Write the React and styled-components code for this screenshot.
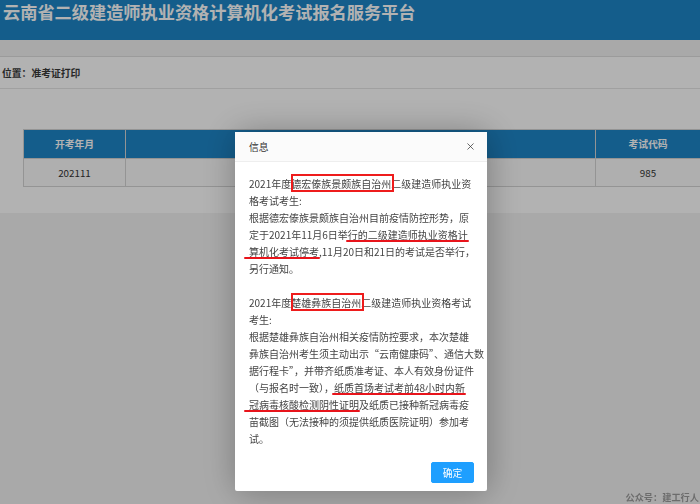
import React from 'react';
import styled, { createGlobalStyle } from 'styled-components';
import { X } from 'lucide-react';

const GlobalStyle = createGlobalStyle`
  html, body {
    margin: 0;
    padding: 0;
    height: 100%;
    overflow: hidden;
  }
  body {
    font-family: "Noto Sans CJK SC", "Noto Sans", sans-serif;
    color: #333;
  }
  #root {
    height: 100%;
  }
`;

const Page = styled.div`
  height: 100%;
  display: flex;
  flex-direction: column;
  background: #fff;
`;

const Header = styled.header`
  height: 40px;
  background: #1e86c8;
  padding: 0 0 0 3px;
  box-sizing: border-box;
`;

const SiteTitle = styled.h1`
  margin: 0;
  font-size: 17.2px;
  line-height: 23px;
  font-weight: 700;
  color: #fff;
`;

const NavBar = styled.nav`
  height: 16px;
  background: #f2f2f2;
  border-bottom: 1px solid #dedede;
`;

const Breadcrumb = styled.div`
  height: 31px;
  display: flex;
  align-items: center;
  padding-left: 2px;
  font-size: 9.8px;
  font-weight: 700;
  color: #3a3a3a;
  border-bottom: 1px solid #e6e6e6;
`;

const Content = styled.section`
  padding: 40px 0 26px 23px;
  background: #fff;
`;

const Table = styled.table`
  width: 678px;
  border-collapse: collapse;
  table-layout: fixed;
  font-size: 9.8px;
`;

const HeadCell = styled.th`
  height: 28px;
  padding: 0;
  background: #1e86c8;
  color: #fff;
  font-weight: 700;
  text-align: center;
  border: 1px solid #d4d4d4;
  width: ${p => p.$width || 'auto'};
`;

const Cell = styled.td`
  height: 27px;
  padding: 0;
  text-align: center;
  background: #fbfbfb;
  color: #333;
  border: 1px solid #d4d4d4;
`;

const Lower = styled.div`
  flex: 1;
  background: #f3f3f3;
`;

const Shade = styled.div`
  position: fixed;
  inset: 0;
  background: rgba(0, 0, 0, 0.3);
`;

const Dialog = styled.div`
  position: fixed;
  left: 235px;
  top: 132px;
  width: 252px;
  background: #fff;
  border-radius: 2px;
  box-shadow: 1px 1px 35px rgba(0, 0, 0, 0.3);
`;

const DialogTitle = styled.div`
  height: 29px;
  display: flex;
  align-items: center;
  justify-content: space-between;
  padding: 0 10px 0 14px;
  background: #fbfbfb;
  border-bottom: 1px solid #eee;
  font-size: 9.8px;
  color: #333;
`;

const CloseButton = styled.button`
  display: flex;
  align-items: center;
  justify-content: center;
  width: 14px;
  height: 14px;
  padding: 0;
  border: 0;
  background: none;
  color: #333;
  cursor: pointer;
`;

const DialogBody = styled.div`
  padding: 13px 14px 14px;
  font-size: 10px;
  line-height: 17px;
  color: #444;
`;

const Line = styled.div`
  white-space: nowrap;
  min-height: 17px;
`;

const Boxed = styled.span`
  position: relative;

  &::before {
    content: '';
    position: absolute;
    top: -2px;
    bottom: -1px;
    left: 0;
    right: -3px;
    border: 2px solid #ee1c1c;
  }
`;

const Marked = styled.span`
  position: relative;

  &::after {
    content: '';
    position: absolute;
    left: ${p => (p.$overhang ? '-5px' : '-2px')};
    right: -1px;
    bottom: 0;
    height: 2px;
    border-radius: 1px;
    background: #e8141b;
  }
`;

const ButtonRow = styled.div`
  display: flex;
  justify-content: flex-end;
  padding: 1px 13px 8px;
`;

const OkButton = styled.button`
  width: 43px;
  height: 21px;
  padding: 0;
  border: 1px solid #1e9fff;
  border-radius: 2px;
  background: #1e9fff;
  color: #fff;
  font-family: inherit;
  font-size: 9.8px;
  cursor: pointer;
`;

const Watermark = styled.div`
  position: fixed;
  right: 1px;
  bottom: 0;
  font-size: 9.2px;
  line-height: 13px;
  font-weight: 700;
  color: #6c6c6c;
`;

export default function App() {
  return (
    <>
      <GlobalStyle />
      <Page>
        <Header>
          <SiteTitle>云南省二级建造师执业资格计算机化考试报名服务平台</SiteTitle>
        </Header>
        <NavBar />
        <Breadcrumb>位置：准考证打印</Breadcrumb>
        <Content>
          <Table>
            <thead>
              <tr>
                <HeadCell $width="101px">开考年月</HeadCell>
                <HeadCell>考试名称</HeadCell>
                <HeadCell $width="104px">考试代码</HeadCell>
              </tr>
            </thead>
            <tbody>
              <tr>
                <Cell>202111</Cell>
                <Cell>二级建造师执业资格考试</Cell>
                <Cell>985</Cell>
              </tr>
            </tbody>
          </Table>
        </Content>
        <Lower />
      </Page>

      <Shade />

      <Dialog>
        <DialogTitle>
          信息
          <CloseButton aria-label="关闭">
            <X size={11} strokeWidth={1.6} />
          </CloseButton>
        </DialogTitle>
        <DialogBody>
          <Line>2021年度<Boxed>德宏傣族景颇族自治州</Boxed>二级建造师执业资</Line>
          <Line>格考试考生:</Line>
          <Line>根据德宏傣族景颇族自治州目前疫情防控形势，原</Line>
          <Line>定于2021年11月6日举<Marked>行的二级建造师执业资格计</Marked></Line>
          <Line><Marked $overhang>算机化考试停考</Marked>,11月20日和21日的考试是否举行，</Line>
          <Line>另行通知。</Line>
          <Line />
          <Line>2021年度<Boxed>楚雄彝族自治州</Boxed>二级建造师执业资格考试</Line>
          <Line>考生:</Line>
          <Line>根据楚雄彝族自治州相关疫情防控要求，本次楚雄</Line>
          <Line>彝族自治州考生须主动出示“云南健康码”、通信大数</Line>
          <Line>据行程卡”，并带齐纸质准考证、本人有效身份证件</Line>
          <Line>（与报名时一致），<Marked>纸质首场考试考前48小时内新</Marked></Line>
          <Line><Marked $overhang>冠病毒核酸检测阴性证明</Marked>及纸质已接种新冠病毒疫</Line>
          <Line>苗截图（无法接种的须提供纸质医院证明）参加考</Line>
          <Line>试。</Line>
        </DialogBody>
        <ButtonRow>
          <OkButton>确定</OkButton>
        </ButtonRow>
      </Dialog>

      <Watermark>公众号：建工行人</Watermark>
    </>
  );
}
